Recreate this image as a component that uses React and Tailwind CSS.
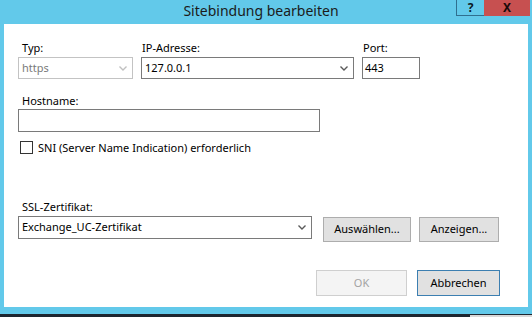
import React from "react";

const Chevron = ({ color = "#5a5a5a" }) => (
  <svg width="8" height="5" viewBox="0 0 8 5" className="shrink-0">
    <polyline points="0.5,0.5 4,4 7.5,0.5" fill="none" stroke={color} strokeWidth="1.4" />
  </svg>
);

export default function App() {
  return (
    <div
      className="w-[532px] h-[317px] overflow-hidden flex flex-col bg-[#62c9ea] text-[11px] text-black"
      style={{ fontFamily: '"Noto Sans", "Open Sans", Arial, sans-serif' }}
    >
      {/* title bar */}
      <div className="relative h-[24px] shrink-0">
        <div className="text-center pr-[10px] pt-[1px] text-[14px] leading-[20px] text-[#1b1b1b]">
          Sitebindung bearbeiten
        </div>
        <div className="absolute top-0 right-[2px] flex">
          <div className="w-[28px] h-[16px] border-l border-b border-[#2f6f8f] flex items-center justify-center text-[12px] font-bold leading-none text-[#0b1a24]">
            ?
          </div>
          <div className="w-[46px] h-[16px] bg-[#c75050] flex items-center justify-center text-[12px] font-bold leading-none text-[#1a0a0a]">
            X
          </div>
        </div>
      </div>

      {/* content */}
      <div className="mx-[4px] h-[283px] bg-white flex flex-col shrink-0">
        {/* row 1 */}
        <div className="flex mt-[16px] ml-[14px]">
          <div className="w-[115px]">
            <div className="h-[15px] leading-[15px] mb-[2px] pl-[4px]">Typ:</div>
            <div className="h-[22px] border border-[#c3c3c3] flex items-center justify-between pl-[3px] pr-[5px] text-[#7a7a7a]">
              <span>https</span>
              <Chevron color="#c0c0c0" />
            </div>
          </div>
          <div className="w-[213px] ml-[8px]">
            <div className="h-[15px] leading-[15px] mb-[2px] pl-[1px]">IP-Adresse:</div>
            <div className="h-[22px] border border-[#7a7a7a] flex items-center justify-between pl-[3px] pr-[5px]">
              <span>127.0.0.1</span>
              <Chevron />
            </div>
          </div>
          <div className="w-[58px] ml-[8px]">
            <div className="h-[15px] leading-[15px] mb-[2px] pl-[1px]">Port:</div>
            <div className="h-[22px] border border-[#7a7a7a] flex items-center pl-[2px]">
              <span>443</span>
            </div>
          </div>
        </div>

        {/* hostname */}
        <div className="ml-[14px] mt-[14px]">
          <div className="h-[15px] leading-[15px] mb-[1px] pl-[4px]">Hostname:</div>
          <div className="w-[302px] h-[23px] border border-[#7a7a7a]" />
        </div>

        {/* checkbox */}
        <div className="ml-[16px] mt-[9px] h-[13px] flex items-center">
          <div className="w-[13px] h-[13px] border border-[#333333] bg-white shrink-0" />
          <span className="ml-[5px] leading-[13px]">SNI (Server Name Indication) erforderlich</span>
        </div>

        {/* ssl */}
        <div className="ml-[14px] mt-[45px]">
          <div className="h-[15px] leading-[15px] mb-[2px] pl-[4px]">SSL-Zertifikat:</div>
          <div className="flex items-start">
            <div className="w-[294px] h-[23px] border border-[#7a7a7a] flex items-center justify-between pl-[3px] pr-[5px]">
              <span>Exchange_UC-Zertifikat</span>
              <Chevron />
            </div>
            <div className="ml-[11px] mt-[1px] w-[88px] h-[25px] border border-[#adadad] bg-[#e1e1e1] flex items-center justify-center">
              Auswählen...
            </div>
            <div className="ml-[8px] mt-[1px] w-[80px] h-[25px] border border-[#adadad] bg-[#e1e1e1] flex items-center justify-center">
              Anzeigen...
            </div>
          </div>
        </div>

        {/* bottom buttons */}
        <div className="mt-[28px] flex justify-end pr-[28px] gap-[10px]">
          <div className="w-[91px] h-[26px] border border-[#cfcfcf] bg-[#f4f4f4] flex items-center justify-center text-[#a3a3a3]">
            OK
          </div>
          <div className="w-[83px] h-[26px] border border-[#3c7fb1] bg-[#e1e1e1] flex items-center justify-center">
            Abbrechen
          </div>
        </div>
      </div>

      <div className="h-[7px] shrink-0" />
      <div className="h-[3px] shrink-0 bg-[#1d2630] flex justify-end">
        <div className="w-[62px] h-[3px] mt-[1px] bg-[#d8d8d8]" />
      </div>
    </div>
  );
}
